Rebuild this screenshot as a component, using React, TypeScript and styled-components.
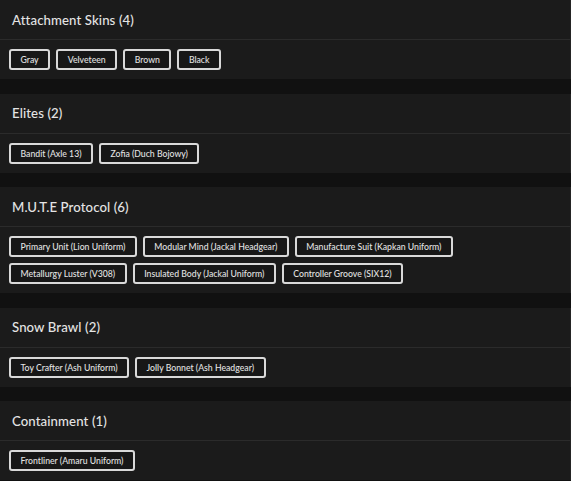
import React from "react";
import styled, { createGlobalStyle } from "styled-components";

const Global = createGlobalStyle`
  html, body { margin: 0; padding: 0; background: #111111; }
  body { font-family: "Lato", "Noto Sans", sans-serif; }
`;

const Page = styled.div`
  display: flex;
  flex-direction: column;
  gap: 14.5px;
  background: #111111;
  width: 571px;
`;

const Card = styled.section`
  background: #1b1b1b;
  border-right: 1px solid #242424;
  box-sizing: border-box;
`;

const Header = styled.div`
  height: 39px;
  display: flex;
  align-items: center;
  padding: 0 12px;
  border-bottom: 1px solid #2b2b2b;
  color: #e4e4e4;
  font-size: 13.2px;
  font-weight: 500;
  letter-spacing: 0.1px;
`;

const Body = styled.div`
  display: flex;
  flex-wrap: wrap;
  gap: 6px;
  padding: 9px 9px;
`;

const Chip = styled.span`
  display: inline-flex;
  align-items: center;
  height: 21px;
  box-sizing: border-box;
  padding: 0 9.5px;
  border: 2px solid #d9d9d9;
  border-radius: 3px;
  background: #171717;
  color: #e2e2e2;
  font-size: 8.7px;
  font-weight: 500;
`;

const groups: { title: string; items: string[] }[] = [
  { title: "Attachment Skins", items: ["Gray", "Velveteen", "Brown", "Black"] },
  { title: "Elites", items: ["Bandit (Axle 13)", "Zofia (Duch Bojowy)"] },
  {
    title: "M.U.T.E Protocol",
    items: [
      "Primary Unit (Lion Uniform)",
      "Modular Mind (Jackal Headgear)",
      "Manufacture Suit (Kapkan Uniform)",
      "Metallurgy Luster (V308)",
      "Insulated Body (Jackal Uniform)",
      "Controller Groove (SIX12)",
    ],
  },
  { title: "Snow Brawl", items: ["Toy Crafter (Ash Uniform)", "Jolly Bonnet (Ash Headgear)"] },
  { title: "Containment", items: ["Frontliner (Amaru Uniform)"] },
];

export default function App() {
  return (
    <>
      <Global />
      <Page>
        {groups.map((g) => (
          <Card key={g.title}>
            <Header>
              {g.title} ({g.items.length})
            </Header>
            <Body>
              {g.items.map((i) => (
                <Chip key={i}>{i}</Chip>
              ))}
            </Body>
          </Card>
        ))}
      </Page>
    </>
  );
}
